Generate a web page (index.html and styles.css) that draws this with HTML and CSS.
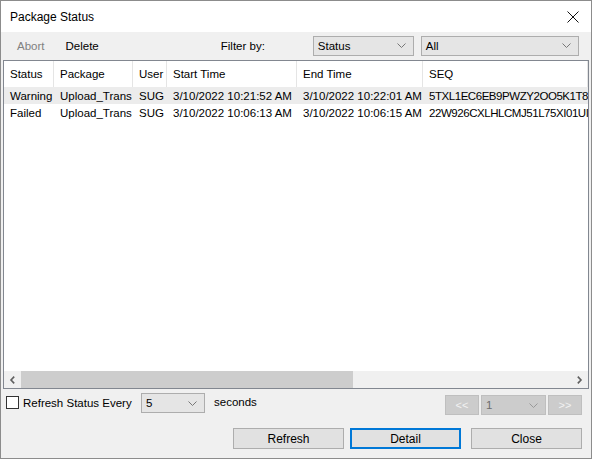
FILE: index.html
```html
<!DOCTYPE html>
<html lang="en">

<head>
    <meta charset="UTF-8">
    <title>Package Status</title>
    <link rel="stylesheet" href="styles.css">
</head>

<body>
    <div class="dialog">
        <!-- Title bar -->
        <div class="titlebar">
            <span class="title">Package Status</span>
            <svg class="close-icon" viewBox="0 0 12 12" fill="none" stroke="#111" stroke-width="1">
                <line x1="0.5" y1="0.5" x2="11.5" y2="11.5"></line>
                <line x1="11.5" y1="0.5" x2="0.5" y2="11.5"></line>
            </svg>
        </div>

        <!-- Toolbar -->
        <div class="toolbar">
            <span class="tool disabled">Abort</span>
            <span class="tool">Delete</span>
            <span class="filter-label">Filter by:</span>
            <div class="combo combo-field">
                <span>Status</span>
                <svg class="chevron" viewBox="0 0 9 5" fill="none" stroke="#777" stroke-width="1"><polyline points="0.5,0.5 4.5,4.5 8.5,0.5"></polyline></svg>
            </div>
            <div class="combo combo-value">
                <span>All</span>
                <svg class="chevron" viewBox="0 0 9 5" fill="none" stroke="#777" stroke-width="1"><polyline points="0.5,0.5 4.5,4.5 8.5,0.5"></polyline></svg>
            </div>
        </div>

        <!-- Package list -->
        <div class="list">
            <div class="grid header">
                <div class="cell">Status</div>
                <div class="cell">Package</div>
                <div class="cell">User</div>
                <div class="cell">Start Time</div>
                <div class="cell">End Time</div>
                <div class="cell">SEQ</div>
            </div>
            <div class="grid row selected">
                <div class="cell">Warning</div>
                <div class="cell">Upload_Trans</div>
                <div class="cell">SUG</div>
                <div class="cell">3/10/2022 10:21:52 AM</div>
                <div class="cell">3/10/2022 10:22:01 AM</div>
                <div class="cell seq">5TXL1EC6EB9PWZY2OO5K1T8</div>
            </div>
            <div class="grid row">
                <div class="cell">Failed</div>
                <div class="cell">Upload_Trans</div>
                <div class="cell">SUG</div>
                <div class="cell">3/10/2022 10:06:13 AM</div>
                <div class="cell">3/10/2022 10:06:15 AM</div>
                <div class="cell seq">22W926CXLHLCMJ51L75XI01UI</div>
            </div>
            <div class="list-fill"></div>
            <div class="hscroll">
                <svg class="arrow" viewBox="0 0 5 8" fill="none" stroke="#606060" stroke-width="1.6"><polyline points="4.2,0.6 1,4 4.2,7.4"></polyline></svg>
                <div class="track"><div class="thumb"></div></div>
                <svg class="arrow" viewBox="0 0 5 8" fill="none" stroke="#606060" stroke-width="1.6"><polyline points="0.8,0.6 4,4 0.8,7.4"></polyline></svg>
            </div>
        </div>

        <!-- Refresh options and paging -->
        <div class="options">
            <span class="checkbox"></span>
            <span class="opt-label">Refresh Status Every</span>
            <div class="combo combo-interval">
                <span>5</span>
                <svg class="chevron" viewBox="0 0 9 5" fill="none" stroke="#777" stroke-width="1"><polyline points="0.5,0.5 4.5,4.5 8.5,0.5"></polyline></svg>
            </div>
            <span class="opt-unit">seconds</span>
            <div class="pager">
                <span class="page-btn">&lt;&lt;</span>
                <div class="combo combo-page">
                    <span>1</span>
                    <svg class="chevron" viewBox="0 0 9 5" fill="none" stroke="#999" stroke-width="1"><polyline points="0.5,0.5 4.5,4.5 8.5,0.5"></polyline></svg>
                </div>
                <span class="page-btn">&gt;&gt;</span>
            </div>
        </div>

        <!-- Dialog buttons -->
        <div class="buttons">
            <button class="btn">Refresh</button>
            <button class="btn default">Detail</button>
            <button class="btn close">Close</button>
        </div>
    </div>
</body>

</html>
```

FILE: styles.css
```css
body {
    margin: 0;
    padding: 0;
    background: #fff;
    font-family: "Liberation Sans", Arial, sans-serif;
    font-size: 11.5px;
    color: #000;
}

.dialog {
    width: 592px;
    height: 459px;
    box-sizing: border-box;
    border: 1px solid #8c8c8c;
    background: #f0f0f0;
    display: flex;
    flex-direction: column;
}
/* Title bar */

.titlebar {
    height: 31px;
    background: #fff;
    display: flex;
    align-items: center;
    padding: 0 12px 0 9px;
}

.title {
    flex: 1;
    font-size: 12px;
}

.close-icon {
    width: 12px;
    height: 12px;
}
/* Toolbar */

.toolbar {
    height: 27px;
    display: flex;
    align-items: center;
}

.tool {
    margin-left: 16px;
}

.tool + .tool {
    margin-left: 21px;
}

.tool.disabled {
    color: #808080;
}

.filter-label {
    margin-left: 122px;
    margin-right: 48px;
}

.combo {
    height: 20px;
    box-sizing: border-box;
    border: 1px solid #adadad;
    background: #e5e5e5;
    display: flex;
    align-items: center;
    padding: 0 7px 0 4px;
}

.combo span {
    flex: 1;
}

.chevron {
    width: 9px;
    height: 5px;
}

.combo-field {
    width: 101px;
}

.combo-value {
    width: 158px;
    margin-left: 7px;
}
/* List */

.list {
    margin: 1px 2px 0 2px;
    height: 329px;
    box-sizing: border-box;
    border: 1px solid #828790;
    background: #fff;
    display: flex;
    flex-direction: column;
    overflow: hidden;
}

.grid {
    display: grid;
    grid-template-columns: 50px 79px 34px 130px 126px 1fr;
}

.cell {
    white-space: nowrap;
    overflow: hidden;
    padding-left: 6px;
}

.cell.seq {
    letter-spacing: -0.45px;
}

.header {
    height: 26px;
    align-items: stretch;
}

.header .cell {
    display: flex;
    align-items: center;
    border-right: 1px solid #e5e5e5;
}

.row {
    height: 17px;
    align-items: center;
}

.row.selected {
    background: #ececec;
}

.list-fill {
    flex: 1;
}

.hscroll {
    height: 17px;
    background: #f0f0f0;
    display: flex;
    align-items: center;
}

.arrow {
    width: 17px;
    height: 8px;
}

.track {
    flex: 1;
    height: 100%;
}

.thumb {
    width: 332px;
    height: 100%;
    background: #cdcdcd;
}
/* Options row */

.options {
    display: flex;
    align-items: center;
    margin-top: 4px;
    height: 20px;
}

.checkbox {
    width: 13px;
    height: 13px;
    box-sizing: border-box;
    border: 1px solid #333;
    background: #fff;
    margin-left: 5px;
    margin-right: 4px;
    margin-top: -1px;
}

.opt-label {
    width: 118px;
    margin-top: -1px;
}

.combo-interval {
    width: 64px;
}

.opt-unit {
    margin-left: 9px;
    margin-top: -3px;
}

.pager {
    align-self: flex-start;
    margin-left: auto;
    margin-right: 9px;
    margin-top: 2px;
    display: flex;
    gap: 2px;
}

.page-btn {
    width: 34px;
    height: 20px;
    box-sizing: border-box;
    border: 1px solid #bfbfbf;
    background: #cccccc;
    color: #f2f2f2;
    font-size: 11px;
    display: flex;
    align-items: center;
    justify-content: center;
}

.combo-page {
    width: 65px;
    background: #cccccc;
    border-color: #bfbfbf;
    color: #6d6d6d;
}
/* Dialog buttons */

.buttons {
    display: flex;
    justify-content: flex-end;
    gap: 6px;
    margin-top: 15px;
    padding-right: 9px;
}

.btn {
    width: 111px;
    height: 21px;
    box-sizing: border-box;
    border: 1px solid #adadad;
    background: #e1e1e1;
    font-family: inherit;
    font-size: 12px;
    color: #000;
    padding: 0;
}

.btn.default {
    border: 2px solid #0078d7;
}

.btn.close {
    margin-left: 4px;
}
```
